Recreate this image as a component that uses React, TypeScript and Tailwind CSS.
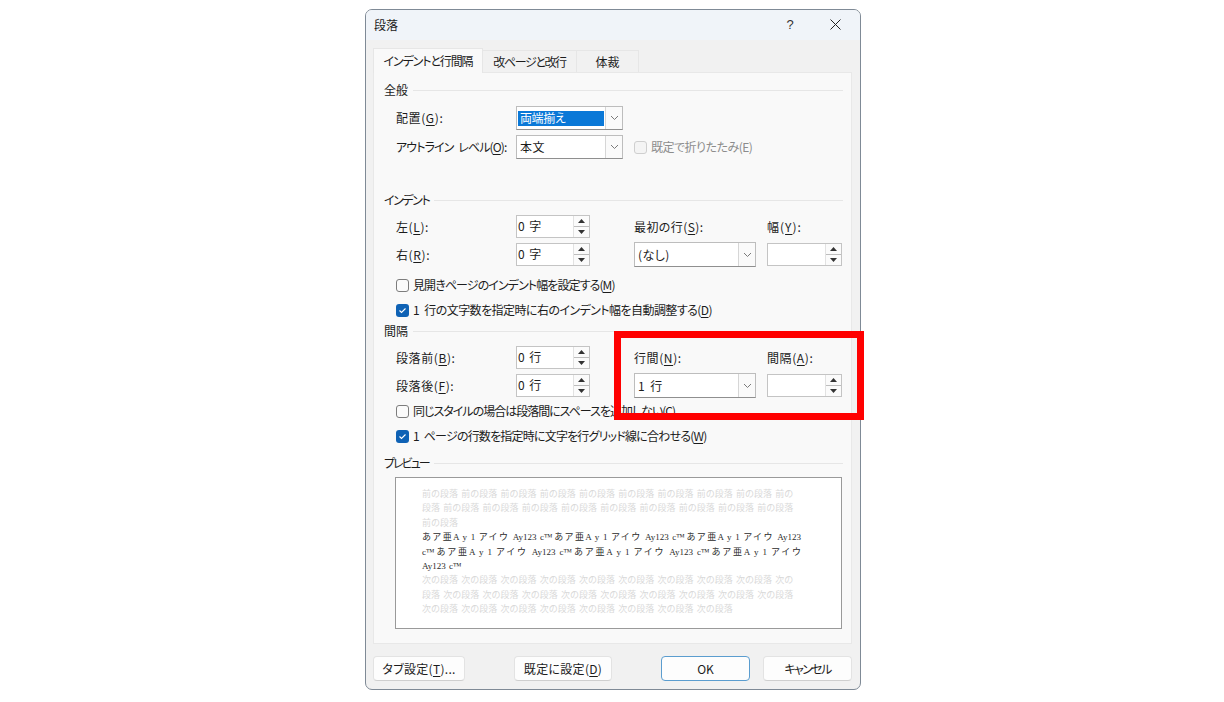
import React from "react";

const ff = "[font-family:'Noto_Sans_CJK_JP','Noto_Sans_CJK_SC',sans-serif]";

function Chevron() {
  return (
    <svg width="9" height="6" viewBox="0 0 9 6" fill="none" stroke="#7a7a7a" strokeWidth="1">
      <path d="M1 1 L4.5 4.5 L8 1" />
    </svg>
  );
}

function Combo({ w, h, value, selected }: { w: string; h: string; value: string; selected?: boolean }) {
  return (
    <div className={`${w} ${h} flex border border-[#bdbdbd] border-b-[#8f8f8f] bg-white`}>
      <div className="flex-1 min-w-0 flex items-center p-[1px]">
        {selected ? (
          <span className="w-full h-[15px] flex items-center bg-[#0a78d7] text-white pl-[2px] leading-none tracking-[-0.4px]">{value}</span>
        ) : (
          <span className="pl-[2px] leading-none tracking-[0.4px] [word-spacing:2px]">{value}</span>
        )}
      </div>
      <div className="w-[17px] bg-[#fafafa] border-l border-[#d6d6d6] flex items-center justify-center">
        <Chevron />
      </div>
    </div>
  );
}

function Spin({ w, h, value }: { w: string; h: string; value?: string }) {
  return (
    <div className={`${w} ${h} flex border border-[#c4c4c4] bg-white`}>
      <div className="flex-1 flex items-center pl-[1px] pb-[1px] leading-none tracking-[1px]">{value}</div>
      <div className="w-[16px] flex flex-col bg-[#fbfbfb] border-l border-[#e2e2e2]">
        <div className="flex-1 flex items-center justify-center border-b border-[#bdbdbd]">
          <svg width="7" height="4" viewBox="0 0 7 4"><path d="M3.5 0 L7 4 L0 4 Z" fill="#333" /></svg>
        </div>
        <div className="flex-1 flex items-center justify-center">
          <svg width="7" height="4" viewBox="0 0 7 4"><path d="M0 0 L7 0 L3.5 4 Z" fill="#333" /></svg>
        </div>
      </div>
    </div>
  );
}

function Section({ title, className, track }: { title: string; className: string; track?: string }) {
  return (
    <div className={`h-[20px] flex items-center gap-[5px] ${className}`}>
      <span className={`leading-none ${track ?? ""}`}>{title}</span>
      <div className="flex-1 h-px bg-[#e6e6e6]" />
    </div>
  );
}

function L({ a, k, b, track }: { a: string; k: string; b?: string; track?: string }) {
  return (
    <span className={`whitespace-nowrap leading-none [word-spacing:3px] ${track ?? "tracking-[0.6px]"}`}>
      {a}(<u className="underline-offset-2">{k}</u>){b ?? ":"}
    </span>
  );
}

function Check({ checked, className, track, children }: { checked?: boolean; className: string; track: string; children: React.ReactNode }) {
  return (
    <div className={`h-[20px] pl-[12px] flex items-center gap-[4px] ${className}`}>
      <CheckBox checked={checked} />
      <span className={`whitespace-nowrap leading-none [word-spacing:3px] ${track}`}>{children}</span>
    </div>
  );
}

function CheckBox({ checked, disabled }: { checked?: boolean; disabled?: boolean }) {
  if (checked)
    return (
      <span className="w-[13px] h-[13px] rounded-[3px] bg-[#0f62b5] flex items-center justify-center shrink-0">
        <svg width="9" height="7" viewBox="0 0 9 7" fill="none" stroke="#fff" strokeWidth="1.1">
          <path d="M1.5 3.5 L3.5 5.5 L7.5 1.5" />
        </svg>
      </span>
    );
  return (
    <span
      className={`w-[13px] h-[13px] rounded-[3px] border shrink-0 ${
        disabled ? "border-[#cfcfcf] bg-[#f4f4f4]" : "border-[#7d7d7d] bg-[#fbfbfb]"
      }`}
    />
  );
}

function Btn({ w, children, primary, className }: { w: string; children: React.ReactNode; primary?: boolean; className?: string }) {
  return (
    <div
      className={`${w} h-[25px] rounded-[4px] flex items-center justify-center bg-[#fdfdfd] leading-none ${
        primary ? "border border-[#5b9dcf]" : "border border-[#e3e3e3] border-b-[#cfcfcf]"
      } ${className ?? ""}`}
    >
      {children}
    </div>
  );
}

const gray1 = [
  "前の段落 前の段落 前の段落 前の段落 前の段落 前の段落 前の段落 前の段落 前の段落 前の",
  "段落 前の段落 前の段落 前の段落 前の段落 前の段落 前の段落 前の段落 前の段落 前の段落",
  "前の段落",
];
const gray2 = [
  "次の段落 次の段落 次の段落 次の段落 次の段落 次の段落 次の段落 次の段落 次の段落 次の",
  "段落 次の段落 次の段落 次の段落 次の段落 次の段落 次の段落 次の段落 次の段落 次の段落",
  "次の段落 次の段落 次の段落 次の段落 次の段落 次の段落 次の段落 次の段落",
];
const unit = "あア亜A y 1 アイウ Ay123 c™";
const head = "あア亜A y 1 アイウ";

function PreviewLine({ text, dark, justify }: { text: string; dark?: boolean; justify?: boolean }) {
  return (
    <div
      className={`h-[14.4px] leading-[14.4px] ${dark ? "text-[#2a2a2a]" : "text-[#d9d9d9]"} ${
        justify ? "[text-align:justify] [text-align-last:justify]" : "whitespace-nowrap [word-spacing:1px]"
      }`}
    >
      {text}
    </div>
  );
}

export default function App() {
  return (
    <div className={`w-[1224px] h-[702px] bg-white overflow-hidden pl-[365px] pt-[9px] text-[12px] text-[#1c1c1c] [font-feature-settings:'palt'] ${ff}`}>
      <div className="w-[496px] h-[681px] rounded-[7px] border border-[#7f8a96] bg-[#f1f1f1] overflow-hidden flex flex-col">
        {/* title bar */}
        <div className="h-[30px] shrink-0 bg-[#f0f4f9] flex items-center pl-[8px] pb-[1px]">
          <span className="flex-1 leading-none">段落</span>
          <span className="w-[18px] mr-[31px] text-center text-[13px] text-[#333] [font-family:'Liberation_Sans',sans-serif] leading-none">?</span>
          <svg className="mr-[19px]" width="11" height="11" viewBox="0 0 11 11" stroke="#222" strokeWidth="1" fill="none">
            <path d="M0.5 0.5 L10.5 10.5 M10.5 0.5 L0.5 10.5" />
          </svg>
        </div>

        {/* tabs */}
        <div className="h-[32px] shrink-0 pl-[7px] flex items-end">
          <div className="w-[110px] h-[25px] bg-[#f9f9f9] border border-b-0 border-[#e6e6e6] flex items-center justify-center leading-none -mb-px relative z-10 tracking-[-1.1px]">
            インデントと行間隔
          </div>
          <div className="w-[94px] h-[22px] bg-[#f1f1f1] border-t border-r border-[#e6e6e6] flex items-center justify-center leading-none tracking-[-1.4px]">
            改ページと改行
          </div>
          <div className="w-[62px] h-[22px] bg-[#f1f1f1] border-t border-r border-[#e6e6e6] flex items-center justify-center leading-none">
            体裁
          </div>
        </div>

        {/* panel */}
        <div className="mx-[7px] w-[479px] h-[572px] shrink-0 bg-[#f9f9f9] border border-[#e8e8e8] pl-[10px] pr-[8px] pt-[7px]">
          <Section title="全般" className="" />
          <div className="mt-[6px] h-[24px] pl-[12px] flex items-center">
            <span className="w-[120px]"><L a="配置" k="G" /></span>
            <Combo w="w-[107px]" h="h-[24px]" value="両端揃え" selected />
          </div>
          <div className="mt-[5px] h-[24px] pl-[12px] flex items-center">
            <span className="w-[120px]"><L a="アウトライン レベル" k="O" track="tracking-[-0.9px]" /></span>
            <Combo w="w-[107px]" h="h-[24px]" value="本文" />
            <span className="ml-[11px] flex items-center gap-[4px] text-[#8c8c8c]">
              <CheckBox disabled />
              <span className="leading-none whitespace-nowrap tracking-[-0.5px]">既定で折りたたみ(E)</span>
            </span>
          </div>

          <Section title="インデント" className="mt-[31px]" track="tracking-[-1.4px]" />
          <div className="mt-[5px] h-[23px] pl-[12px] flex items-center">
            <span className="w-[120px]"><L a="左" k="L" /></span>
            <Spin w="w-[74px]" h="h-[23px]" value="0 字" />
            <span className="ml-[44px] w-[133px]"><L a="最初の行" k="S" track="tracking-[0.4px]" /></span>
            <L a="幅" k="Y" track="tracking-[1px]" />
          </div>
          <div className="mt-[4px] h-[25px] pl-[12px] flex items-center">
            <span className="w-[120px]"><L a="右" k="R" /></span>
            <Spin w="w-[74px]" h="h-[23px]" value="0 字" />
            <span className="ml-[44px]"><Combo w="w-[122px]" h="h-[25px]" value="(なし)" /></span>
            <span className="ml-[11px]"><Spin w="w-[75px]" h="h-[23px]" /></span>
          </div>
          <Check className="mt-[8px]" track="tracking-[-0.9px]">見開きページのインデント幅を設定する(<u className="underline-offset-2">M</u>)</Check>
          <Check checked className="mt-[5px]" track="tracking-[-0.55px]">1 行の文字数を指定時に右のインデント幅を自動調整する(<u className="underline-offset-2">D</u>)</Check>

          <Section title="間隔" className="mt-[1px]" />
          <div className="mt-[5px] h-[23px] pl-[12px] flex items-center">
            <span className="w-[120px]"><L a="段落前" k="B" /></span>
            <Spin w="w-[74px]" h="h-[23px]" value="0 行" />
            <span className="ml-[44px] w-[133px]"><L a="行間" k="N" /></span>
            <L a="間隔" k="A" />
          </div>
          <div className="mt-[4px] h-[25px] pl-[12px] flex items-center">
            <span className="w-[120px]"><L a="段落後" k="F" /></span>
            <Spin w="w-[74px]" h="h-[23px]" value="0 行" />
            <span className="ml-[44px]"><Combo w="w-[122px]" h="h-[25px]" value="1 行" /></span>
            <span className="ml-[11px]"><Spin w="w-[75px]" h="h-[23px]" /></span>
          </div>
          <Check className="mt-[3px]" track="tracking-[-1px]">同じスタイルの場合は段落間にスペースを追加しない(<u className="underline-offset-2">C</u>)</Check>
          <Check checked className="mt-[5px]" track="tracking-[-0.8px]">1 ページの行数を指定時に文字を行グリッド線に合わせる(<u className="underline-offset-2">W</u>)</Check>

          <Section title="プレビュー" className="mt-[7px]" track="tracking-[-2px]" />
          <div className="mt-[4px] ml-[11px] w-[447px] h-[152px] bg-white border border-[#9a9a9a] pl-[26px] pr-[40px] pt-[9px] text-[9px] [font-family:'Liberation_Serif','Noto_Sans_CJK_JP',serif] [font-feature-settings:normal]">
            {gray1.map((t) => <PreviewLine key={t} text={t} />)}
            <PreviewLine dark justify text={`${unit}${unit}${head} Ay123`} />
            <PreviewLine dark justify text={`c™${unit}${unit}${head}`} />
            <PreviewLine dark text="Ay123 c™" />
            {gray2.map((t) => <PreviewLine key={t} text={t} />)}
          </div>
        </div>

        {/* footer buttons */}
        <div className="mt-[12px] pl-[7px] flex items-center">
          <Btn w="w-[92px]" className="tracking-[0.3px]">タブ設定(<u className="underline-offset-2">T</u>)...</Btn>
          <Btn w="w-[98px]" className="ml-[49px] tracking-[0.3px]">既定に設定(<u className="underline-offset-2">D</u>)</Btn>
          <Btn w="w-[89px]" primary className="ml-[49px]">OK</Btn>
          <Btn w="w-[89px]" className="ml-[13px] tracking-[-1.6px]">キャンセル</Btn>
        </div>
      </div>

      {/* red highlight overlay */}
      <div className="absolute left-[614px] top-[331px] w-[250px] h-[89px] border-[7px] border-[#ff0000]" />
    </div>
  );
}
